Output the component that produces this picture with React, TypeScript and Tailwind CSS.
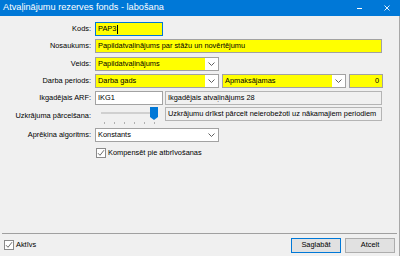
import React from "react";

function Chevron() {
  return (
    <svg width="7" height="4" viewBox="0 0 7 4" className="block">
      <polyline points="0.5,0.5 3.5,3.5 6.5,0.5" fill="none" stroke="#606060" strokeWidth="1" />
    </svg>
  );
}

function Check() {
  return (
    <svg width="8" height="8" viewBox="0 0 8 8" className="block">
      <polyline points="1,4.2 3,6.3 7,1.2" fill="none" stroke="#5a5a5a" strokeWidth="0.9" />
    </svg>
  );
}

function Select({ text, w, yellow }: { text: string; w: string; yellow?: boolean }) {
  return (
    <div className={`flex h-[14px] border border-[#a2a2a2] ${w}`}>
      <div className={`flex flex-1 items-center pl-[2px] ${yellow ? "bg-[#ffff00]" : "bg-white"}`}>{text}</div>
      <div className="flex w-[13px] items-center justify-center bg-white">
        <Chevron />
      </div>
    </div>
  );
}

function Row({ label, children, mt }: { label: string; children: React.ReactNode; mt: string }) {
  return (
    <div className={`flex items-center ${mt}`}>
      <div className="w-[92px] pr-[1px] text-right">{label}</div>
      <div className="ml-[3px] flex items-center">{children}</div>
    </div>
  );
}

export default function App() {
  const ticks = [0, 1, 2, 3, 4, 5];
  return (
    <div className="flex h-[256px] w-[400px] flex-col overflow-hidden bg-[#f0f0f0] font-['Liberation_Sans',Arial,sans-serif] text-[7.4px] text-black">
      <div className="flex h-[16px] shrink-0 items-center bg-[#0078d7] pl-[3px] text-white">
        <span className="text-[9.2px]">Atvaļinājumu rezerves fonds - labošana</span>
        <div className="ml-auto flex items-center">
          <div className="mr-[22px] h-[1px] w-[5px] bg-white" />
          <svg width="6" height="6" viewBox="0 0 6 6" className="mr-[10px] block">
            <path d="M0.5 0.5 L5.5 5.5 M5.5 0.5 L0.5 5.5" stroke="white" strokeWidth="0.9" />
          </svg>
        </div>
      </div>

      <div className="flex flex-1 flex-col border-r border-[#a8a8a8]">
        <div className="flex flex-1 flex-col pt-[6px]">
          <Row label="Kods:" mt="mt-0">
            <div className="flex h-[14px] w-[68px] items-center border border-[#0078d7] bg-[#ffff00] pl-[2px]">
              PAP3
              <div className="ml-[1px] h-[9px] w-[1px] bg-black" />
            </div>
          </Row>
          <Row label="Nosaukums:" mt="mt-[3px]">
            <div className="flex h-[14px] w-[287px] items-center border border-[#a2a2a2] bg-[#ffff00] pl-[2px]">
              Papildatvaļinājums par stāžu un novērtējumu
            </div>
          </Row>
          <Row label="Veids:" mt="mt-[4px]">
            <Select text="Papildatvaļinājums" w="w-[124px]" yellow />
          </Row>
          <Row label="Darba periods:" mt="mt-[3px]">
            <Select text="Darba gads" w="w-[124px]" yellow />
            <div className="ml-[3px]">
              <Select text="Apmaksājamas" w="w-[124px]" yellow />
            </div>
            <div className="ml-[3px] flex h-[14px] w-[34px] items-center justify-end border border-[#a2a2a2] bg-[#ffff00] pr-[3px]">
              0
            </div>
          </Row>
          <Row label="Ikgadējais ARF:" mt="mt-[3px]">
            <div className="flex h-[14px] w-[68px] items-center border border-[#a2a2a2] bg-white pl-[2px]">IKG1</div>
            <div className="ml-[2px] flex h-[14px] w-[217px] items-center border border-[#b4b4b4] bg-[#f0f0f0] pl-[2px]">
              Ikgadējais atvaļinājums 28
            </div>
          </Row>
          <Row label="Uzkrājuma pārcelšana:" mt="mt-[2px]">
            <div className="relative h-[18px] w-[68px]">
              <div className="absolute left-[6px] top-[5px] h-[2px] w-[56px] border border-[#d0d0d0] bg-[#e7e7e7]" />
              <svg width="8" height="13" viewBox="0 0 8 13" className="absolute left-[55px] top-0 block">
                <path d="M0 0 H8 V10 L4 13 L0 10 Z" fill="#0078d7" />
              </svg>
              <div className="absolute left-[9px] top-[15px] flex w-[51px] justify-between">
                {ticks.map((t) => (
                  <div key={t} className="h-[2px] w-[1px] bg-[#b0b0b0]" />
                ))}
              </div>
            </div>
            <div className="ml-[2px] flex h-[14px] w-[217px] items-center self-start border border-[#b4b4b4] bg-[#f0f0f0] pl-[2px]">
              Uzkrājumu drīkst pārcelt neierobežoti uz nākamajiem periodiem
            </div>
          </Row>
          <Row label="Aprēķina algoritms:" mt="mt-[3px]">
            <Select text="Konstants" w="w-[124px]" />
          </Row>
          <div className="ml-[96px] mt-[5px] flex items-center">
            <div className="flex h-[10px] w-[10px] items-center justify-center border border-[#8a8a8a] bg-white">
              <Check />
            </div>
            <span className="ml-[2px]">Kompensēt pie atbrīvošanas</span>
          </div>
        </div>

        <div className="mx-[2px] h-[1px] bg-[#a0a0a0]" />
        <div className="flex h-[22px] items-center pl-[4px] pr-[4px]">
          <div className="flex h-[10px] w-[10px] items-center justify-center border border-[#8a8a8a] bg-white">
            <Check />
          </div>
          <span className="ml-[2px]">Aktīvs</span>
          <div className="ml-auto flex gap-[4px]">
            <button className="flex h-[15px] w-[50px] items-center justify-center border border-[#0078d7] bg-[#e1e1e1]">
              Saglabāt
            </button>
            <button className="flex h-[15px] w-[50px] items-center justify-center border border-[#adadad] bg-[#e1e1e1]">
              Atcelt
            </button>
          </div>
        </div>
      </div>
    </div>
  );
}
